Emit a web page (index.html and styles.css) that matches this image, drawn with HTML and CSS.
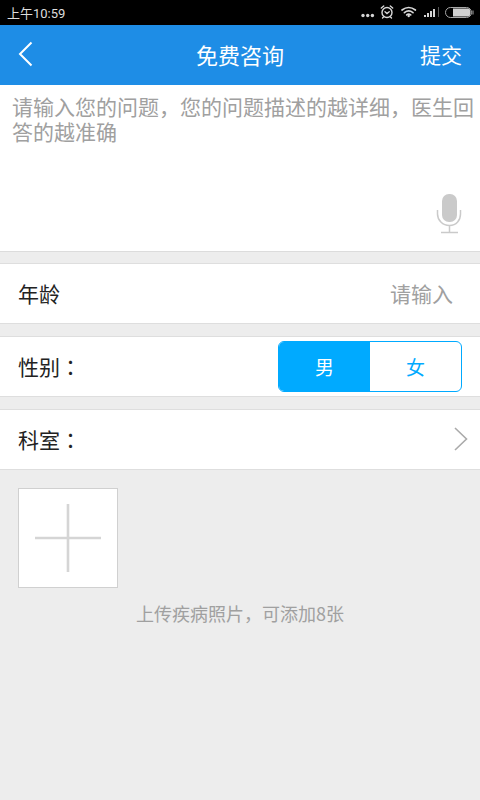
FILE: index.html
```html
<!DOCTYPE html>
<html lang="zh-Hans">
<head>
<meta charset="utf-8">
<meta name="viewport" content="width=device-width, initial-scale=1">
<title>免费咨询</title>
<link rel="stylesheet" href="styles.css">
</head>
<body>
<div class="status">
  <span class="clock">上午10:59</span>
  <svg class="status-icons" width="116" height="25" viewBox="0 0 116 25" aria-hidden="true">
    <g fill="#d4d4d4">
      <circle cx="3" cy="15.500" r="1.700"/><circle cx="7.700" cy="15.500" r="1.700"/><circle cx="12.400" cy="15.500" r="1.700"/>
    </g>
    <g fill="none" stroke="#d8d8d8" stroke-width="1.400" stroke-linecap="round">
      <circle cx="27" cy="12.500" r="5"/>
      <path d="M21.300 8l2.400-2M32.700 8l-2.400-2M25 11.800l2 1.700 2.200-1.700M23.500 17l-1 1M30.500 17l1 1"/>
      <path stroke-width="1.700" d="M42 10q6.700-5 13.400 0M44.400 12.600q4.300-3.400 8.600 0M46.700 14.900q2-1.500 4 0"/>
    </g>
    <circle cx="48.700" cy="16" r="1.200" fill="#d8d8d8"/>
    <g fill="#d4d4d4">
      <rect x="64" y="15" width="2" height="2"/><rect x="67" y="13" width="2" height="4"/><rect x="70" y="11" width="2" height="6"/><rect x="73" y="9" width="2" height="8"/>
    </g>
    <rect x="78" y="7" width="1" height="10" fill="#555"/>
    <rect x="85.500" y="7.500" width="26" height="10" rx="5" fill="none" stroke="#a8a8a8"/>
    <path d="M93 8.500h15q2.500 0 2.500 4t-2.500 4H93z" fill="#d0d0d0"/>
    <path d="M113 10.500v4" stroke="#a8a8a8"/>
  </svg>
</div>
<header class="bar">
  <button class="back" type="button" aria-label="返回">
    <svg width="16" height="26" viewBox="0 0 16 26" aria-hidden="true"><path d="M13.500 1.500L2 13l11.500 11.500" fill="none" stroke="#fff" stroke-width="2"/></svg>
  </button>
  <h1>免费咨询</h1>
  <button class="submit" type="submit" form="consult">提交</button>
</header>
<form id="consult">
  <div class="question">
    <textarea aria-label="问题" placeholder="请输入您的问题，您的问题描述的越详细，医生回答的越准确"></textarea>
    <button class="mic" type="button" aria-label="语音输入">
      <svg width="26" height="42" viewBox="0 0 26 42" aria-hidden="true">
        <rect x="6" y="1" width="15" height="28" rx="7" fill="#cacaca"/>
        <path d="M1.500 17v4c0 6 5 11.500 12 11.500S24.500 27 24.500 21v-4M13.500 32.500V39M5 39.500h17" fill="none" stroke="#cacaca" stroke-width="1.500"/>
      </svg>
    </button>
  </div>
  <div class="row">
    <label for="age">年龄</label>
    <input class="age" id="age" type="text" inputmode="numeric" placeholder="请输入">
  </div>
  <div class="row" role="radiogroup" aria-labelledby="sex">
    <span id="sex">性别<span class="mark" lang="zh-Hant">：</span></span>
    <div class="segments">
      <label class="segment"><input type="radio" name="sex" checked><span>男</span></label>
      <label class="segment"><input type="radio" name="sex"><span>女</span></label>
    </div>
  </div>
  <button class="row" type="button">
    <span>科室<span class="mark" lang="zh-Hant">：</span></span>
    <svg class="chevron" width="14" height="24" viewBox="0 0 14 24" aria-hidden="true"><path d="M1 1l11.500 11L1 23" fill="none" stroke="#aaa" stroke-width="1.600"/></svg>
  </button>
  <div class="photos">
    <button class="add" type="button" aria-label="添加照片">
      <svg width="66" height="68" viewBox="0 0 66 68" aria-hidden="true"><path d="M0 34h66M33 0v68" stroke="#d5d5d5" stroke-width="2.600"/></svg>
    </button>
    <p class="hint">上传疾病照片，可添加8张</p>
  </div>
</form>
</body>
</html>
```
FILE: styles.css
```css
* {
  box-sizing: border-box;
}

body {
  margin: 0;
  min-height: 100vh;
  background: #ededed;
  color: #222;
  font-family: "Noto Sans CJK SC", sans-serif;
  font-size: 21px;
}

button,
input,
textarea {
  margin: 0;
  padding: 0;
  border: 0;
  background: none;
  color: inherit;
  font: inherit;
}

svg {
  display: block;
}

.mark {
  font-family: "Noto Sans CJK TC", sans-serif;
}

.status {
  display: flex;
  align-items: center;
  justify-content: space-between;
  height: 25px;
  padding: 0 4px 0 7px;
  background: #000;
  color: #ddd;
  font-family: Roboto, "Noto Sans CJK SC", sans-serif;
  font-size: 13px;
}

.bar {
  display: grid;
  grid-template-columns: 1fr auto 1fr;
  align-items: center;
  height: 60px;
  padding: 0 18px 2px;
  background: #1e8de6;
  color: #fff;
}

.bar h1 {
  margin: 0;
  font-size: 22px;
  font-weight: 400;
}

.back {
  justify-self: start;
}

.submit {
  justify-self: end;
}

.question {
  position: relative;
  height: 167px;
  border-bottom: 1px solid #dcdcdc;
  background: #fff;
}

.question textarea {
  display: block;
  width: 100%;
  height: 100%;
  padding: 9px 6px 9px 12px;
  line-height: 25px;
  resize: none;
  outline: 0;
}

::placeholder {
  color: #a0a0a0;
}

.mic {
  position: absolute;
  right: 18px;
  bottom: 16px;
}

.row {
  display: flex;
  align-items: center;
  justify-content: space-between;
  width: 100%;
  height: 61px;
  margin-top: 12px;
  padding: 0 18px 1px;
  border: solid #dedede;
  border-width: 1px 0;
  background: #fff;
  text-align: left;
}

.question + .row {
  margin-top: 11px;
}

.age {
  flex: 1;
  min-width: 0;
  padding-right: 9px;
  text-align: right;
  outline: 0;
}

.segments {
  display: flex;
  width: 184px;
  height: 51px;
  overflow: hidden;
  border: 1px solid #00aaff;
  border-radius: 6px;
  color: #00aaff;
  font-size: 19px;
}

.segment {
  display: flex;
  flex: 1;
  align-items: center;
  justify-content: center;
}

.segment input {
  position: absolute;
  appearance: none;
}

.segment:has(:checked) {
  background: #00aaff;
  color: #fff;
}

.chevron {
  margin-right: -6px;
}

.photos {
  padding: 18px;
}

.add {
  display: flex;
  align-items: center;
  justify-content: center;
  width: 100px;
  height: 100px;
  border: 1px solid #d0d0d0;
  background: #fff;
}

.hint {
  margin: 12px 0 0;
  color: #a0a0a0;
  font-size: 18px;
  line-height: 26px;
  text-align: center;
}
```
